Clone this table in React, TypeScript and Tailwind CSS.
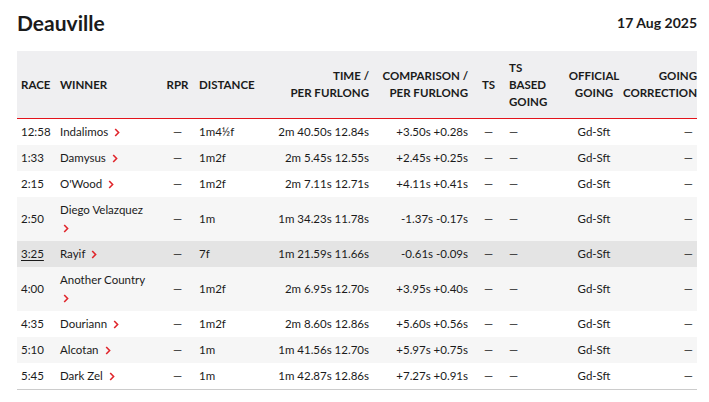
import React from "react";

type Row = {
  race: string;
  winner: string;
  dist: string;
  time: string;
  comp: string;
  hover?: boolean;
};

const rows: Row[] = [
  { race: "12:58", winner: "Indalimos", dist: "1m4½f", time: "2m 40.50s 12.84s", comp: "+3.50s +0.28s" },
  { race: "1:33", winner: "Damysus", dist: "1m2f", time: "2m 5.45s 12.55s", comp: "+2.45s +0.25s" },
  { race: "2:15", winner: "O'Wood", dist: "1m2f", time: "2m 7.11s 12.71s", comp: "+4.11s +0.41s" },
  { race: "2:50", winner: "Diego Velazquez", dist: "1m", time: "1m 34.23s 11.78s", comp: "-1.37s -0.17s" },
  { race: "3:25", winner: "Rayif", dist: "7f", time: "1m 21.59s 11.66s", comp: "-0.61s -0.09s", hover: true },
  { race: "4:00", winner: "Another Country", dist: "1m2f", time: "2m 6.95s 12.70s", comp: "+3.95s +0.40s" },
  { race: "4:35", winner: "Douriann", dist: "1m2f", time: "2m 8.60s 12.86s", comp: "+5.60s +0.56s" },
  { race: "5:10", winner: "Alcotan", dist: "1m", time: "1m 41.56s 12.70s", comp: "+5.97s +0.75s" },
  { race: "5:45", winner: "Dark Zel", dist: "1m", time: "1m 42.87s 12.86s", comp: "+7.27s +0.91s" },
];

function Chevron() {
  return (
    <svg width="6" height="9" viewBox="0 0 6 9" className="inline-block align-[-1px] ml-[3px]">
      <path d="M1.2 1 L4.6 4.5 L1.2 8" fill="none" stroke="#e0262c" strokeWidth="1.6" />
    </svg>
  );
}

export default function App() {
  const font = { fontFamily: "Lato, 'Noto Sans', sans-serif" };
  return (
    <div className="w-[709px] h-[402px] bg-white text-[#1b1b1b] pl-[17px] pr-[12px] pt-[7px]" style={font}>
      <div className="flex items-center justify-between h-[31px]">
        <h1 className="text-[21px] font-bold leading-none">Deauville</h1>
        <div className="text-[14px] font-bold leading-none">17 Aug 2025</div>
      </div>
      <table className="mt-[13px] w-[680px] table-fixed border-collapse text-[11.5px]">
        <colgroup>
          <col className="w-[39px]" />
          <col className="w-[104px]" />
          <col className="w-[35px]" />
          <col className="w-[65px]" />
          <col className="w-[113px]" />
          <col className="w-[99px]" />
          <col className="w-[33px]" />
          <col className="w-[57px]" />
          <col className="w-[64px]" />
          <col className="w-[71px]" />
        </colgroup>
        <thead>
          <tr className="bg-[#efeff1] h-[67px] border-b border-[#e3131b] text-[11.5px] font-bold uppercase leading-[17px]">
            <th className="px-1 text-left font-bold">Race</th>
            <th className="px-1 text-left font-bold">Winner</th>
            <th className="px-1 text-center font-bold">RPR</th>
            <th className="px-1 text-left font-bold">Distance</th>
            <th className="px-1 text-right font-bold">Time /<br />Per Furlong</th>
            <th className="px-1 text-right font-bold whitespace-nowrap">Comparison /<br />Per Furlong</th>
            <th className="px-1 text-center font-bold">TS</th>
            <th className="px-1 text-left font-bold">TS<br />Based<br />Going</th>
            <th className="px-1 text-center font-bold">Official<br />Going</th>
            <th className="pl-1 pr-0 font-bold">
              <div className="flex flex-col items-end whitespace-nowrap">
                <span>Going</span>
                <span>Correction</span>
              </div>
            </th>
          </tr>
        </thead>
        <tbody className="leading-[18px]">
          {rows.map((r, i) => (
            <tr
              key={r.race}
              className={
                (r.hover ? "bg-[#e4e4e4]" : i % 2 === 1 ? "bg-[#f6f6f6]" : "bg-white") +
                (i === rows.length - 1 ? " border-b border-[#cccccc]" : "")
              }
            >
              <td className="px-1 py-1 align-middle">
                <span className={r.hover ? "underline underline-offset-2" : ""}>{r.race}</span>
              </td>
              <td className="pl-1 pr-[12px] py-1 align-middle">
                {r.winner} <Chevron />
              </td>
              <td className="px-1 py-1 text-center">—</td>
              <td className="px-1 py-1">{r.dist}</td>
              <td className="px-1 py-1 text-right whitespace-nowrap">{r.time}</td>
              <td className="px-1 py-1 text-right whitespace-nowrap">{r.comp}</td>
              <td className="px-1 py-1 text-center">—</td>
              <td className="px-1 py-1 text-left">—</td>
              <td className="px-1 py-1 text-center">Gd-Sft</td>
              <td className="px-1 py-1 text-right">—</td>
            </tr>
          ))}
        </tbody>
      </table>
    </div>
  );
}
